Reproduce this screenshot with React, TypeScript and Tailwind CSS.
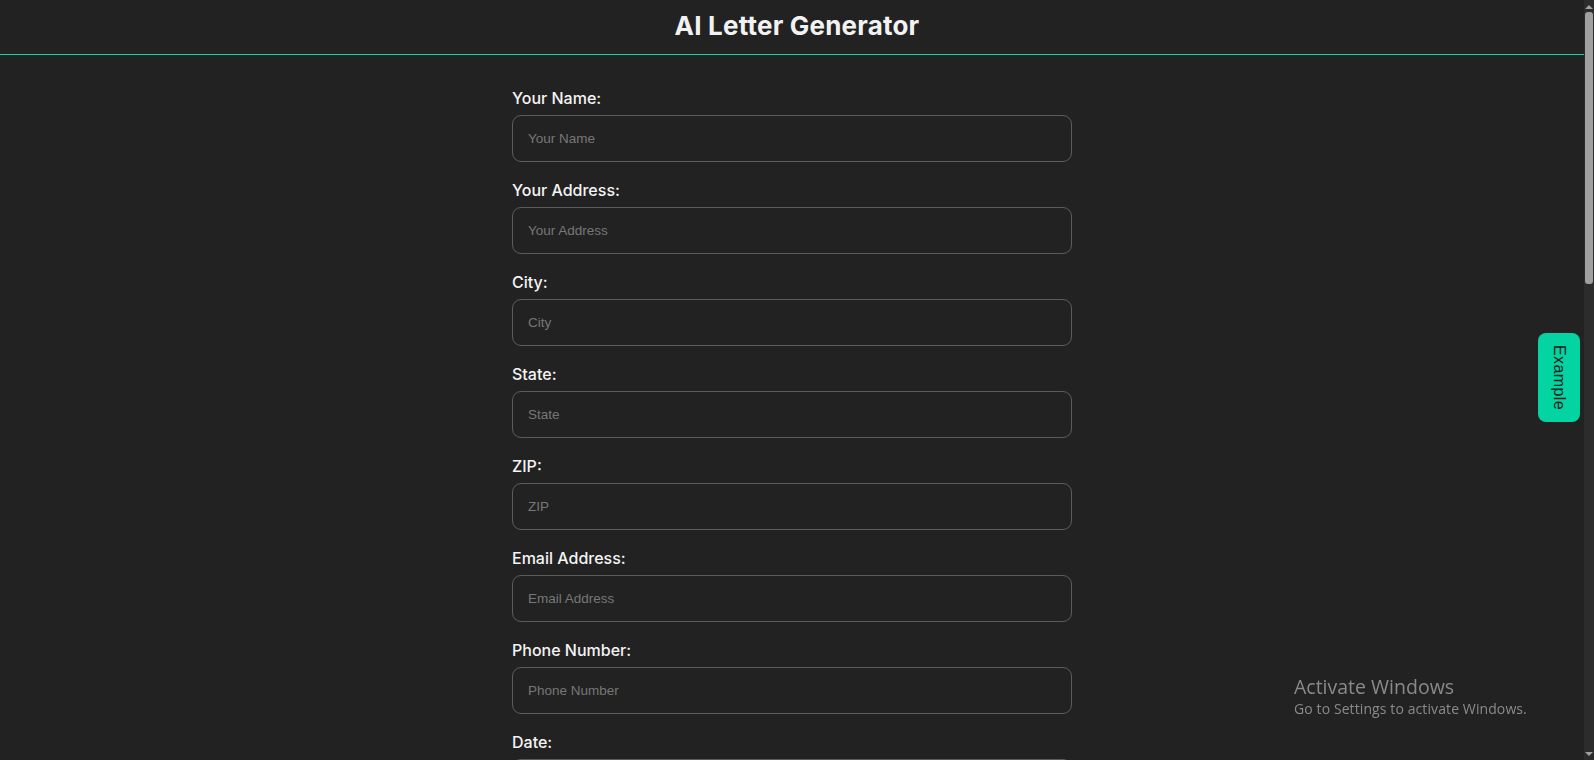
import React from 'react';

const fields = [
  'Your Name',
  'Your Address',
  'City',
  'State',
  'ZIP',
  'Email Address',
  'Phone Number',
  'Date',
];

const FieldRow: React.FC<{ label: string }> = ({ label }) => (
  <div className="mb-[16px]">
    <label className="block mb-[5px] text-[16px] leading-6 font-[500] text-[#f4f4f4] font-['Inter',sans-serif]">
      {label}:
    </label>
    <input
      type="text"
      placeholder={label}
      className="block w-full h-[47px] rounded-[9px] border border-[#5c5c5c] bg-[#222222] px-[15px] text-[13.5px] text-white placeholder:text-[#777777] font-['Liberation_Sans',Arial,sans-serif] outline-none"
    />
  </div>
);

export default function App() {
  return (
    <div className="flex h-[760px] w-full overflow-hidden bg-[#222222]">
      {/* Page */}
      <div className="flex-1 min-w-0 flex flex-col">
        <header className="h-[55px] shrink-0 border-b border-[#14d4a4] flex items-center justify-center">
          <h1 className="text-[26px] font-bold tracking-[0.2px] text-[#f2f2f2] font-['Inter',sans-serif] translate-x-[5px] -translate-y-[2px]">
            AI Letter Generator
          </h1>
        </header>

        <main className="flex-1 flex justify-center pt-[31px]">
          <form className="w-[560px]">
            {fields.map((f) => (
              <FieldRow key={f} label={f} />
            ))}
          </form>
        </main>
      </div>

      {/* Scrollbar */}
      <div className="w-[10px] shrink-0 bg-[#2c2c2c] flex flex-col items-center">
        <div className="h-[12px] flex items-center justify-center">
          <svg width="8" height="5" viewBox="0 0 8 5">
            <path d="M0 5 L4 1 L8 5 Z" fill="#a0a0a0" />
          </svg>
        </div>
        <div className="w-[8px] h-[272px] rounded-[3px] bg-[#a0a0a0]" />
        <div className="flex-1" />
        <div className="h-[12px] flex items-center justify-center">
          <svg width="8" height="5" viewBox="0 0 8 5">
            <path d="M0 0 L4 4 L8 0 Z" fill="#a0a0a0" />
          </svg>
        </div>
      </div>

      {/* Example tab */}
      <button className="fixed right-[14px] top-[333px] w-[42px] h-[89px] rounded-[8px] bg-[#04d3a2] flex items-center justify-center">
        <span className="[writing-mode:vertical-rl] text-[16px] text-[#0f2420] font-['Liberation_Sans',sans-serif] tracking-[0.4px]">
          Example
        </span>
      </button>

      {/* Windows watermark */}
      <div className="fixed left-[1294px] top-[675px] pointer-events-none font-['Open_Sans',sans-serif] text-[#8a8a8a]">
        <div className="text-[19.5px] leading-[24px]">Activate Windows</div>
        <div className="text-[14px] leading-[20px] tracking-[0.1px]">Go to Settings to activate Windows.</div>
      </div>
    </div>
  );
}
